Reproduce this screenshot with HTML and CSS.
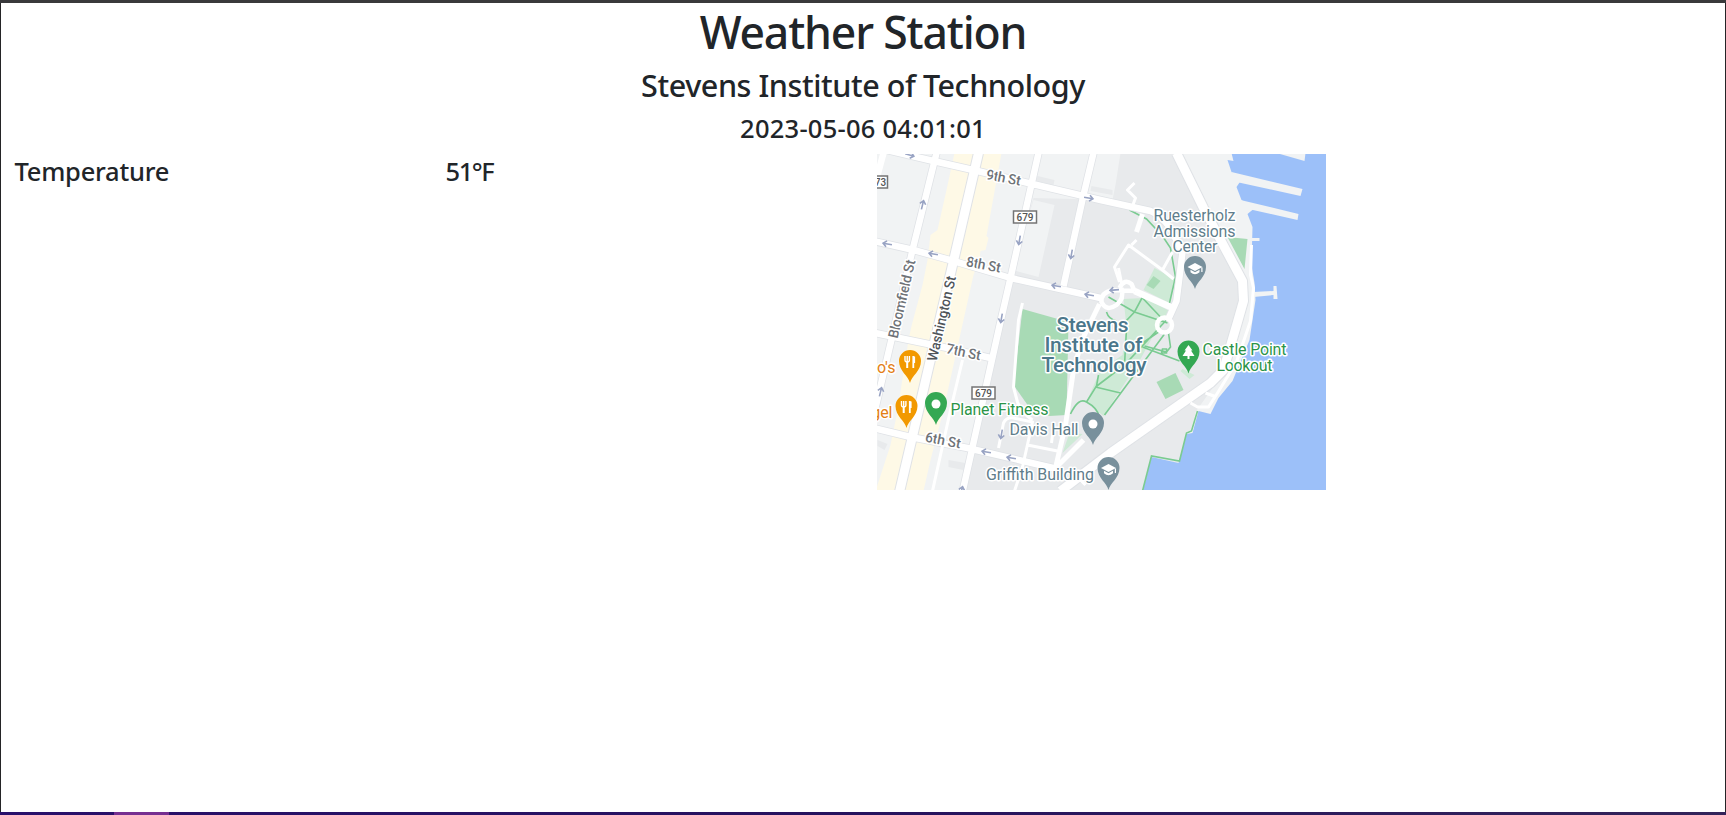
FILE: index.html
```html
<!DOCTYPE html>
<html lang="en">
<head>
<meta charset="utf-8">
<title>Weather Station</title>
<link rel="stylesheet" href="styles.css">
</head>
<body>
<div class="window">
<main class="page">
  <header class="heading">
    <h1 class="title">Weather Station</h1>
    <h2 class="place">Stevens Institute of Technology</h2>
    <h3 class="time">2023-05-06 04:01:01</h3>
  </header>
  <section class="row">
    <div class="col reading name">Temperature</div>
    <div class="col reading value">51°F</div>
    <div class="col">
      <svg class="map" viewBox="876.5 154 449 336" preserveAspectRatio="none" role="img" aria-label="Campus map">
        <defs>
          <path id="arrow" d="M-4.500 0H4.500M1 -3L4.500 0L1 3" fill="none" stroke="#98a3c3" stroke-width="1.6"/>
          <path id="pin" d="M0 22C-1.500 15-11 10-11 0A11 11 0 0 1 11 0C11 10 1.500 15 0 22Z"/>
          <g id="cap" fill="#fff"><path d="M-7.500-1L0-5L7.500-1L0 3Z"/><path d="M-4.500 1.800V4.300Q0 8 4.500 4.300V1.800L0 4.300ZM6.300-.5H7.500V4H6.300Z"/></g>
          <g id="food" fill="none" stroke="#fff"><path d="M-2.800-1V6" stroke-width="2"/><path d="M-5-6V-2Q-5 0-2.800 0T-.6-2V-6M-2.800-6V0" stroke-width="1.400"/><path d="M3.300-6V6M4.200-5.500V1" stroke-width="1.800"/></g>
        </defs>
        <rect x="876" y="153" width="451" height="339" fill="#f1f3f4"/>
        <path class="campus" d="M1033 198L1112 200L1115 185L1120 153H1176L1240 280V310L1225 370L1195 412L1192 431L1186 433L1178 463L1151 457L1142 491H962L1010 278Z"/>
        <path fill="#f1f3f4" d="M1033 200L1054 205L1038 277L1012 270Z"/>
        <path class="campus" d="M1037 176L1054 180L1053 185L1035 181ZM1091 186L1112 190V195L1090 191ZM948 460L965 463L963 470L948 467ZM877 440L887 444L884 450L877 446Z"/>
        <path class="yellow" d="M954 153H1001L986 236L988 238L985 250L980 251L979 259L973 275L943 410L930 460L923 491H875L890 445L897 411L908 340L911 326L922 285L927 260L930 235L937 230L946 190Z"/>
        <path class="park" d="M1022 309L1068 322L1066 415L1049 416L1032 412L1013 385Z"/>
        <path class="lawn" d="M1123 299L1144 298L1169 311L1164 320L1152 337L1140 359L1103 416L1086 402L1100 370L1122 355L1126 327ZM1154 268L1174 279L1169 303L1143 290ZM1069 433L1082 434L1062 453ZM1182 369L1194 375L1189 379L1180 371Z"/>
        <path class="park" d="M1153 276L1160 281L1153 289L1146 285ZM1156 382L1175 373L1183 390L1165 399ZM1227 237L1247 239L1244 269Z"/>
        <path class="water" d="M1231 153L1233 161L1227 160L1231 172L1240 181L1236 187L1241 200L1253 209L1247 214L1252 227L1251 265L1254 283L1255 300L1249 340L1239 364L1232 381L1218 398L1210 414L1198 411L1192 433L1186 434L1178 463L1151 457L1142 492H1327V153Z"/>
        <path class="pier" d="M1231 172L1302 189L1300 196L1236 182ZM1240 200L1298 214L1297 220L1248 209ZM1276 153H1305L1304 161ZM1250 238H1259V241H1250ZM1253 292L1273 291V286H1276L1277 299H1273V295L1253 297Z"/>
        <g class="walk">
          <path d="M1129 210L1146 219L1162 236L1170 248L1175 277L1169 303M1108 297L1134 312L1167 323M1142 297L1134 312L1117 330M1142 298L1160 317M1106 312Q1108 319 1116 321M1126 329L1124 365L1166 320M1124 365L1095 387M1142 347L1179 361M1142 343L1158 332M1164 334L1104 415M1168 333L1170 347L1166 352L1144 346M1162 349H1166V353H1161ZM1098 375L1096 386L1086 402M1095 387L1120 393M1070 414Q1078 397 1086 402Q1097 408 1099 417M1197 411L1191 431L1186 433L1179 461L1151 456L1142 491"/>
        </g>
        <g class="road outline">
          <path class="wide" d="M978 153L953 261L899 492"/><path class="mid" d="M936 153L912 250L874 412M873 241L913 250L953 261L1010 278L1100 298M875 333L947 348L990 358M873 428L910 437L967 448L1057 469M886 150L933 161L977 171L1100 200L1150 211Q1160 215 1169 227L1182 252L1176 301L1167 321M1038 153L1010 278L999 326L962 492M1093 153L1083 195L1063 286"/><path class="wide" d="M1176 153L1203 208L1242 281L1243 301L1237 322L1223 370L1210 383L1110 453L1060 491"/>
        </g>
        <g class="road">
          <path class="wide" d="M978 153L953 261L899 492"/><path class="mid" d="M936 153L912 250L874 412M883 153L876 179M873 241L913 250L953 261L1010 278L1100 298M875 333L947 348L990 358M873 428L910 437L967 448L1057 469M886 150L933 161L977 171L1100 200L1150 211Q1160 215 1169 227L1182 252L1176 301L1167 321M1038 153L1010 278L999 326L962 492M1093 153L1083 195L1063 286M1134 291L1170 307"/><path class="ring" d="M1119 288Q1124 278 1131 284L1134 291M1134 291L1112 290Q1100 293 1101 302Q1106 312 1116 305Q1124 299 1121 288"/><path class="side" d="M1099 304L1082 339L1073 370L1065 425L1055 468L1083 440M1136 232L1142 214"/><path class="wide" d="M1176 153L1203 208L1242 281L1243 301L1237 322L1223 370L1210 383L1110 453L1060 491"/><circle class="ring" cx="1164" cy="325" r="7.500"/>
          <path class="thin" d="M962 360L950 410L932 491M1022 303L1018 320L1013 387L1017 402Q1020 412 1032 420M998 448L1003 423Q1006 417 1013 418L1032 422L1022 467L1014 491M1027 445L1057 451M1053 427L1051 443M1134 183L1127 190L1135 198L1132 206M1119 282L1114 267L1128 245L1162 270L1173 279M1162 270L1172 252M1118 268L1121 283M1131 245L1136 240M1251 245L1250 275L1253 288L1250 321L1236 362L1217 393L1208 407H1197L1190 403M1205 393L1216 397M1075 475L1085 485"/>
        </g>
        <g>
          <use href="#arrow" transform="translate(909 155) rotate(15)"/><use href="#arrow" transform="translate(922 205) rotate(-76)"/><use href="#arrow" transform="translate(887 244) rotate(190)"/><use href="#arrow" transform="translate(933 254) rotate(190)"/><use href="#arrow" transform="translate(1088 198) rotate(10)"/><use href="#arrow" transform="translate(1019 240) rotate(100)"/><use href="#arrow" transform="translate(1071 254) rotate(100)"/><use href="#arrow" transform="translate(1056 286) rotate(190)"/><use href="#arrow" transform="translate(1089 295) rotate(190)"/><use href="#arrow" transform="translate(1114 290) rotate(175)"/><use href="#arrow" transform="translate(1001 318) rotate(100)"/><use href="#arrow" transform="translate(880 392) rotate(-76)"/><use href="#arrow" transform="translate(1001 434) rotate(100)"/><use href="#arrow" transform="translate(986 452) rotate(190)"/><use href="#arrow" transform="translate(1011 458) rotate(190)"/><use href="#arrow" transform="translate(961 491) rotate(-76)"/>
        </g>
        <g class="shield"><rect x="1013" y="211" width="23" height="12"/><rect x="971.500" y="387" width="23" height="12"/><rect x="864" y="176" width="23" height="12"/><text x="1024.500" y="221">679</text><text x="983" y="397">679</text><text x="880" y="186">73</text></g>
        <g class="label street">
          <text transform="translate(985 179) rotate(11)" textLength="35">9th St</text>
          <text transform="translate(965 266) rotate(11)" textLength="35">8th St</text>
          <text transform="translate(945 353) rotate(12)" textLength="35">7th St</text>
          <text transform="translate(924 441.500) rotate(11)" textLength="36">6th St</text>
          <text transform="translate(897 339) rotate(-77)" textLength="80">Bloomfield St</text>
          <text class="major" transform="translate(936 362) rotate(-77)" textLength="87">Washington St</text>
        </g>
        <g class="label gray">
          <text x="1153" y="220.500" textLength="82">Ruesterholz</text><text x="1153" y="236.500" textLength="82">Admissions</text><text x="1172" y="252" textLength="45">Center</text>
          <text x="1009" y="434.500" textLength="69">Davis Hall</text><text x="985.500" y="479.500" textLength="108">Griffith Building</text>
        </g>
        <g class="label campus-name"><text x="1056" y="332" textLength="72">Stevens</text><text x="1044" y="352" textLength="98">Institute of</text><text x="1041" y="372" textLength="105">Technology</text></g>
        <g class="label green"><text x="1202" y="355" textLength="84">Castle Point</text><text x="1216" y="370.500" textLength="56">Lookout</text><text x="950" y="414.500" textLength="98">Planet Fitness</text></g>
        <g class="label orange"><text x="895" y="373" text-anchor="end">o's</text><text x="892" y="418" text-anchor="end">gel</text></g>
        <g fill="#78909c"><use href="#pin" x="1194.500" y="267"/><use href="#pin" x="1092.500" y="423"/><use href="#pin" x="1108" y="468"/></g>
        <g fill="#34a853"><use href="#pin" x="1188" y="351.500"/><use href="#pin" x="935.500" y="403"/></g>
        <g fill="#f29900"><use href="#pin" x="909.500" y="361"/><use href="#pin" x="906" y="406"/></g>
        <circle cx="1092.500" cy="424" r="4.500" fill="#fff"/><circle cx="935.500" cy="404" r="4.500" fill="#fff"/>
        <use href="#cap" x="1194.500" y="268"/><use href="#cap" x="1108" y="469"/><use href="#food" x="909.500" y="362"/><use href="#food" x="906" y="407"/>
        <path fill="#fff" d="M1188 345L1192 350.500H1190.500L1194 356H1189V359H1187V356H1182L1185.500 350.500H1184Z"/>
      </svg>
    </div>
    <div class="col"></div>
  </section>
</main>
<footer class="taskbar"><span class="active"></span></footer>
</div>
</body>
</html>
```
FILE: styles.css
```css
* { box-sizing: border-box; }
body { margin: 0; background: #fff; color: #212529; font-family: "Noto Sans", "Open Sans", sans-serif; }
.window { height: 815px; overflow: hidden; display: flex; flex-direction: column; border-top: 3px solid #39393b; }
.page { flex: 1; border: solid #242426; border-width: 0 1px; overflow: hidden; }
.heading { height: 151px; text-align: center; }
.title, .place, .time { margin: 0; font-weight: 500; white-space: nowrap; }
.title { font-size: 44.500px; line-height: 57px; height: 64px; letter-spacing: -1.150px; }
.place { font-size: 30.500px; line-height: 36px; height: 44px; letter-spacing: -0.430px; }
.time { font-size: 25.500px; line-height: 34px; letter-spacing: 0.250px; }
.row { display: grid; grid-template-columns: repeat(4, minmax(0, 1fr)); }
.col { padding-left: 13.500px; }
.reading { font-size: 25.500px; font-weight: 500; line-height: 34px; }
.name { letter-spacing: -0.250px; }
.value { letter-spacing: -1.400px; }
.map { display: block; width: 449px; height: 336px; }
.campus { fill: #e8eaec; }
.yellow { fill: #fef9e6; }
.park { fill: #a8dab5; }
.lawn { fill: #ceead6; }
.water { fill: #9cc0f9; }
.pier { fill: #f1f3f4; }
.walk { fill: none; stroke: #7acb91; stroke-width: 1.600; }
.road { fill: none; stroke: #fff; stroke-linejoin: round; }
.road .wide { stroke-width: 9; }
.road .mid { stroke-width: 6.500; }
.road .ring { stroke-width: 4.500; }
.road .side { stroke-width: 5; }
.road .thin { stroke-width: 3; }
.outline { stroke: #dfe2e6; }
.outline .wide { stroke-width: 11; }
.outline .mid { stroke-width: 8; }
.shield rect { fill: #fff; stroke: #747474; stroke-width: 1.500; }
.shield text { font: 500 10px Roboto, sans-serif; fill: #555; text-anchor: middle; }
.label { font-family: Roboto, sans-serif; font-size: 16px; stroke: #fff; stroke-width: 3px; stroke-linejoin: round; paint-order: stroke; }
.street { font-size: 14px; fill: #6f7378; font-weight: 500; }
.street .major { fill: #50555a; }
.gray { fill: #607d8b; }
.campus-name { fill: #4b778b; font-size: 21px; font-weight: 500; }
.green { fill: #2b9448; }
.orange { fill: #e37f16; }
.taskbar { height: 3px; flex: none; background: linear-gradient(90deg, #29106b, #26125e 50%, #33245a); padding-left: 114px; display: flex; }
.active { width: 55px; background: #762f91; }
```
